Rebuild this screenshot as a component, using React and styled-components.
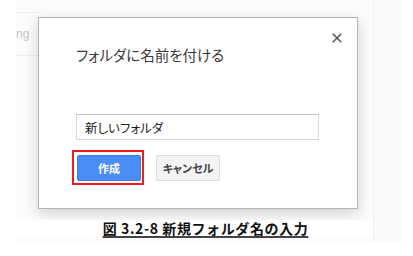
import React from "react";
import styled, { createGlobalStyle } from "styled-components";

const Global = createGlobalStyle`
  html, body { margin: 0; padding: 0; background: #ffffff; }
  body { font-family: Arial, "Liberation Sans", "Noto Sans CJK JP", sans-serif; }
  * { box-sizing: border-box; }
`;

const Page = styled.div`
  width: 413px;
  height: 256px;
  display: flex;
  flex-direction: row;
  align-items: flex-start;
  background: #ffffff;
  overflow: hidden;
`;

const Margin = styled.div`
  width: 16px;
  flex: none;
`;

const Sheet = styled.div`
  width: 357px;
  height: 242px;
  flex: none;
  background: #fcfcfc;
  display: flex;
  flex-direction: column;
`;

const Strip = styled.div`
  width: 28px;
  height: 242px;
  flex: none;
  border-left: 1px solid #f1f1f1;
  background: #fafafa;
`;

const Row = styled.div`
  display: flex;
  flex-direction: row;
  align-items: flex-start;
`;

const Side = styled.div`
  width: 22px;
  flex: none;
  display: flex;
  flex-direction: column;
`;

const FaintLine = styled.div`
  height: 1px;
  background: #efefef;
  margin-top: ${(p) => p.$top}px;
`;

const Ghost = styled.div`
  margin-top: 14px;
  height: 14px;
  font-size: 12px;
  line-height: 14px;
  color: #c4c4c4;
  font-family: Arial, "Liberation Sans", sans-serif;
`;

const Dialog = styled.div`
  margin-top: 17px;
  width: 320px;
  background: #ffffff;
  border: 1px solid #b4b4b4;
  box-shadow: 0 4px 14px rgba(0, 0, 0, 0.18);
  padding: 16px 14px 23px 37px;
  display: flex;
  flex-direction: column;
`;

const Header = styled.div`
  display: flex;
  justify-content: space-between;
  align-items: flex-start;
`;

const Title = styled.div`
  margin-top: 10px;
  font-family: "Noto Sans CJK JP", sans-serif;
  font-feature-settings: "palt";
  font-size: 14.5px;
  line-height: 22px;
  color: #3a3a3a;
  font-weight: 400;
`;

const Close = styled.button`
  margin-top: -2px;
  width: 12px;
  height: 12px;
  padding: 0;
  border: none;
  background: transparent;
  display: flex;
  cursor: pointer;
`;

const Input = styled.div`
  margin-top: 48px;
  width: 243px;
  height: 26px;
  border: 1px solid #d9d9d9;
  border-top-color: #c0c0c0;
  background: #ffffff;
  padding: 0 8px;
  display: flex;
  align-items: center;
  font-family: "Noto Sans CJK JP", sans-serif;
  font-feature-settings: "palt";
  font-size: 12.5px;
  color: #222;
`;

const Actions = styled.div`
  margin-top: 10px;
  margin-left: -4px;
  display: flex;
  flex-direction: row;
  align-items: flex-start;
  gap: 12px;
`;

const Highlight = styled.div`
  border: 2px solid #ee1c1c;
  padding: 3px 1px 2px 3px;
  display: flex;
`;

const Button = styled.button`
  width: 64px;
  height: 26px;
  margin: ${(p) => (p.$primary ? "0" : "5px 0 0 0")};
  padding: 0;
  border-radius: 2px;
  border: 1px solid ${(p) => (p.$primary ? "#3a7ee8" : "#dadada")};
  background: ${(p) => (p.$primary ? "#4b8df6" : "#f4f4f4")};
  color: ${(p) => (p.$primary ? "#ffffff" : "#444444")};
  font-family: "Noto Sans CJK JP", sans-serif;
  font-feature-settings: "palt";
  font-weight: 700;
  font-size: 11px;
  line-height: 14px;
  display: flex;
  align-items: center;
  justify-content: center;
`;

const CaptionWrap = styled.div`
  margin-top: 11px;
  padding-left: 22px;
  display: flex;
  justify-content: center;
  background: #ffffff;
`;

const Caption = styled.div`
  font-family: "Noto Sans CJK JP", sans-serif;
  font-weight: 700;
  font-size: 14px;
  line-height: 17px;
  color: #111;
  letter-spacing: 0.6px;
  text-decoration: underline;
  text-decoration-thickness: 1.5px;
  text-underline-offset: 2px;
  text-decoration-color: #444;
  white-space: nowrap;
`;

export default function App() {
  return (
    <>
      <Global />
      <Page>
        <Margin />
        <Sheet>
          <Row>
            <Side>
              <FaintLine $top={12} />
              <Ghost>ng</Ghost>
              <FaintLine $top={14} />
            </Side>
            <Dialog>
              <Header>
                <Title>フォルダに名前を付ける</Title>
                <Close aria-label="閉じる">
                  <svg width="12" height="12" viewBox="0 0 12 12">
                    <path
                      d="M1.8 1.8 L10.2 10.2 M10.2 1.8 L1.8 10.2"
                      stroke="#555"
                      strokeWidth="1.6"
                      fill="none"
                    />
                  </svg>
                </Close>
              </Header>
              <Input>新しいフォルダ</Input>
              <Actions>
                <Highlight>
                  <Button $primary>作成</Button>
                </Highlight>
                <Button>キャンセル</Button>
              </Actions>
            </Dialog>
          </Row>
          <CaptionWrap>
            <Caption>図 3.2-8 新規フォルダ名の入力</Caption>
          </CaptionWrap>
        </Sheet>
        <Strip />
      </Page>
    </>
  );
}
